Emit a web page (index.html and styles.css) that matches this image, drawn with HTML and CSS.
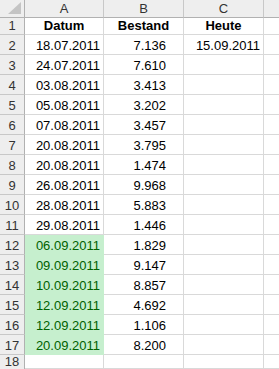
FILE: index.html
```html
<!DOCTYPE html>
<html>
<head>
<meta charset="utf-8">
<link rel="stylesheet" href="styles.css">
</head>
<body>
<div class="sheet">
  <div class="hd corner"><svg width="24" height="17" viewBox="0 0 24 17"><polygon points="8,14 21,14 21,2" fill="#c4c4c4"/></svg></div>
  <div class="hd col">A</div>
  <div class="hd col">B</div>
  <div class="hd col">C</div>
  <div class="hd col last"></div>

  <div class="hd rn">1</div>
  <div class="c ctr b">Datum</div>
  <div class="c ctr b">Bestand</div>
  <div class="c ctr b">Heute</div>
  <div class="c last"></div>

  <div class="hd rn">2</div>
  <div class="c r">18.07.2011</div>
  <div class="c num">7.136</div>
  <div class="c r">15.09.2011</div>
  <div class="c last"></div>

  <div class="hd rn">3</div>
  <div class="c r">24.07.2011</div>
  <div class="c num">7.610</div>
  <div class="c"></div>
  <div class="c last"></div>

  <div class="hd rn">4</div>
  <div class="c r">03.08.2011</div>
  <div class="c num">3.413</div>
  <div class="c"></div>
  <div class="c last"></div>

  <div class="hd rn">5</div>
  <div class="c r">05.08.2011</div>
  <div class="c num">3.202</div>
  <div class="c"></div>
  <div class="c last"></div>

  <div class="hd rn">6</div>
  <div class="c r">07.08.2011</div>
  <div class="c num">3.457</div>
  <div class="c"></div>
  <div class="c last"></div>

  <div class="hd rn">7</div>
  <div class="c r">20.08.2011</div>
  <div class="c num">3.795</div>
  <div class="c"></div>
  <div class="c last"></div>

  <div class="hd rn">8</div>
  <div class="c r">20.08.2011</div>
  <div class="c num">1.474</div>
  <div class="c"></div>
  <div class="c last"></div>

  <div class="hd rn">9</div>
  <div class="c r">26.08.2011</div>
  <div class="c num">9.968</div>
  <div class="c"></div>
  <div class="c last"></div>

  <div class="hd rn">10</div>
  <div class="c r">28.08.2011</div>
  <div class="c num">5.883</div>
  <div class="c"></div>
  <div class="c last"></div>

  <div class="hd rn">11</div>
  <div class="c r">29.08.2011</div>
  <div class="c num">1.446</div>
  <div class="c"></div>
  <div class="c last"></div>

  <div class="hd rn">12</div>
  <div class="c r good">06.09.2011</div>
  <div class="c num">1.829</div>
  <div class="c"></div>
  <div class="c last"></div>

  <div class="hd rn">13</div>
  <div class="c r good">09.09.2011</div>
  <div class="c num">9.147</div>
  <div class="c"></div>
  <div class="c last"></div>

  <div class="hd rn">14</div>
  <div class="c r good">10.09.2011</div>
  <div class="c num">8.857</div>
  <div class="c"></div>
  <div class="c last"></div>

  <div class="hd rn">15</div>
  <div class="c r good">12.09.2011</div>
  <div class="c num">4.692</div>
  <div class="c"></div>
  <div class="c last"></div>

  <div class="hd rn">16</div>
  <div class="c r good">12.09.2011</div>
  <div class="c num">1.106</div>
  <div class="c"></div>
  <div class="c last"></div>

  <div class="hd rn">17</div>
  <div class="c r good">20.09.2011</div>
  <div class="c num">8.200</div>
  <div class="c"></div>
  <div class="c last"></div>

  <div class="hd rn tail">18</div>
  <div class="c"></div>
  <div class="c"></div>
  <div class="c"></div>
  <div class="c last"></div>
</div>
</body>
</html>
```

FILE: styles.css
```css
html, body {
  margin: 0;
  padding: 0;
  background: #ffffff;
  overflow: hidden;
}

.sheet {
  display: grid;
  grid-template-columns: 25px 79px 80px 80px 1fr;
  grid-template-rows: 18px 17px repeat(16, 20px) 1fr;
  width: 279px;
  height: 369px;
  overflow: hidden;
  font-family: "Liberation Sans", Arial, sans-serif;
  font-size: 13px;
  line-height: 15px;
  color: #000;
}

.hd {
  box-sizing: border-box;
  background: #eeeeee;
  color: #333333;
  display: flex;
  align-items: flex-end;
  justify-content: center;
  padding-bottom: 1px;
}

.corner {
  border-right: 1px solid #b1b1b1;
  border-bottom: 1px solid #b1b1b1;
  padding: 0;
  align-items: flex-start;
  justify-content: flex-start;
}

.corner svg {
  display: block;
}

.col {
  border-right: 1px solid #c8c8c8;
  border-bottom: 1px solid #b1b1b1;
}

.col.last {
  border-right: none;
}

.rn {
  border-right: 1px solid #b1b1b1;
  border-bottom: 1px solid #c8c8c8;
}

.rn.tail {
  align-items: flex-start;
  padding-bottom: 0;
  line-height: 14px;
  border-bottom: none;
}

.c {
  box-sizing: border-box;
  border-right: 1px solid #d9d9d9;
  border-bottom: 1px solid #d9d9d9;
  display: flex;
  align-items: flex-end;
  padding-bottom: 1px;
  white-space: nowrap;
}

.c.last {
  border-right: none;
}

.ctr {
  justify-content: center;
}

.b {
  font-weight: bold;
}

.r {
  justify-content: flex-end;
  padding-right: 3px;
}

.num {
  justify-content: flex-end;
  padding-right: 17px;
}

.good {
  background: #c6efce;
  color: #006100;
  border-right-color: #c6efce;
  border-bottom-color: #c6efce;
}
```
